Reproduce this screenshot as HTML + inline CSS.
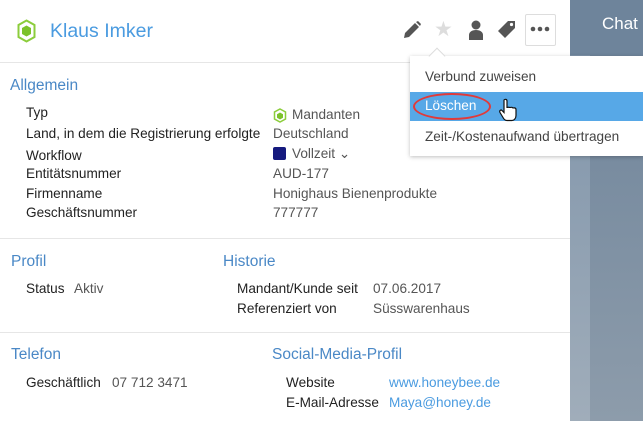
<!DOCTYPE html><html><head><style>
body{margin:0;width:643px;height:421px;overflow:hidden;background:#fff;font-family:"Liberation Sans",sans-serif;position:relative}
.a{position:absolute;white-space:nowrap;line-height:16px}
.l{font-size:13.6px;color:#222}
.v{font-size:13.6px;color:#555}
.h{font-size:15.5px;color:#4a88c6;line-height:18px}
.lk{font-size:13.6px;color:#4a9be0}
.sep{position:absolute;left:0;width:570px;height:1px;background:#e6e6e6}
</style></head><body>
<div style="position:absolute;left:570px;top:0;width:73px;height:421px;background:linear-gradient(#7b91a8,#a0adba)"></div>
<div style="position:absolute;left:590px;top:0;width:53px;height:421px;background:linear-gradient(#6c8299,#8d9cab)"></div>
<div style="position:absolute;left:570px;top:0;width:73px;height:55px;background:#6e849b"></div>
<div class="a" style="left:602px;top:14px;font-size:17px;color:#fff;line-height:20px">Chat</div>

<svg class="a" style="left:17px;top:19px" width="19" height="24" viewBox="0 0 19 24"><polygon points="9.5,1.5 17.5,6 17.5,18 9.5,22.5 1.5,18 1.5,6" fill="none" stroke="#8ccd3c" stroke-width="2"/><polygon points="9.5,6.5 14,9 14,15 9.5,17.5 5,15 5,9" fill="#7cc22a"/></svg>
<div class="a" style="left:50px;top:20px;font-size:19.5px;color:#4a9be0;line-height:22px">Klaus Imker</div>

<svg class="a" style="left:402px;top:20px" width="20" height="20" viewBox="0 0 20 20"><path d="M2 18l1-5L13 3l4 4L7 17z M14 2l2-1 3 3-1 2z" fill="#555"/></svg>
<div class="a" style="left:434px;top:19px;font-size:21px;color:#ddd;line-height:22px">★</div>
<svg class="a" style="left:467px;top:19px" width="18" height="22" viewBox="0 0 18 22"><circle cx="9" cy="6" r="4.5" fill="#555"/><path d="M2 21v-5c0-3 3-5 7-5s7 2 7 5v5z" fill="#555"/></svg>
<svg class="a" style="left:497px;top:19px" width="20" height="22" viewBox="0 0 20 22"><path d="M11 2h7v7L8 19 1 12z" fill="#555"/><circle cx="14.5" cy="5.5" r="1.6" fill="#fff"/></svg>
<div style="position:absolute;left:525px;top:14px;width:29px;height:30px;border:1px solid #ddd;border-radius:2px;background:#fff"></div>
<svg class="a" style="left:530px;top:26px" width="20" height="6" viewBox="0 0 20 6"><circle cx="3" cy="3" r="2.3" fill="#555"/><circle cx="10" cy="3" r="2.3" fill="#555"/><circle cx="17" cy="3" r="2.3" fill="#555"/></svg>

<div class="sep" style="top:62px"></div>

<div style="position:absolute;left:410px;top:56px;width:233px;height:100px;background:#fff;box-shadow:0 1px 4px rgba(0,0,0,.25)"></div>
<div style="position:absolute;left:431px;top:50px;width:11px;height:11px;background:#fff;transform:rotate(45deg);border-left:1px solid #ddd;border-top:1px solid #ddd"></div>
<div style="position:absolute;left:410px;top:92px;width:233px;height:29px;background:#57a8e7"></div>
<div class="a v" style="left:425px;top:69px;color:#444">Verbund zuweisen</div>
<div class="a" style="left:425px;top:98px;font-size:13.6px;color:#fff">Löschen</div>
<div style="position:absolute;left:413px;top:93px;width:74px;height:23px;border:2px solid #e03a3a;border-radius:50%"></div>
<svg class="a" style="left:499px;top:98px" width="18" height="24" viewBox="0 0 18 24"><path d="M5 2c1-1 3-1 3 1v7c0-1 3-1 3 0 0-1 3-1 3 0.5 0-1 3-1 3 1v6c0 3-2 5-4 5H8c-2 0-3-1-4-3l-3-5c-1-2 1-3 2-2l2 2z" fill="#fff" stroke="#111" stroke-width="1.2"/></svg>
<div class="a v" style="left:425px;top:129px;color:#444">Zeit-/Kostenaufwand übertragen</div>

<div class="a h" style="left:10px;top:77px">Allgemein</div>
<div class="a l" style="left:26px;top:105px">Typ</div>
<svg class="a" style="left:273px;top:108px" width="14" height="15" viewBox="0 0 14 15"><polygon points="7,1 12.5,4 12.5,11 7,14 1.5,11 1.5,4" fill="none" stroke="#8ccd3c" stroke-width="1.5"/><polygon points="7,4.5 10,6.2 10,9.8 7,11.5 4,9.8 4,6.2" fill="#7cc22a"/></svg>
<div class="a v" style="left:292px;top:107px">Mandanten</div>
<div class="a l" style="left:26px;top:126px">Land, in dem die Registrierung erfolgte</div>
<div class="a v" style="left:273px;top:126px">Deutschland</div>
<div class="a l" style="left:26px;top:148px">Workflow</div>
<div style="position:absolute;left:273px;top:147px;width:13px;height:13px;background:#151a7e;border-radius:2px"></div>
<div class="a v" style="left:292px;top:146px">Vollzeit ⌄</div>
<div class="a l" style="left:26px;top:166px">Entitätsnummer</div>
<div class="a v" style="left:273px;top:166px">AUD-177</div>
<div class="a l" style="left:26px;top:186px">Firmenname</div>
<div class="a v" style="left:273px;top:186px">Honighaus Bienenprodukte</div>
<div class="a l" style="left:26px;top:205px">Geschäftsnummer</div>
<div class="a v" style="left:273px;top:205px">777777</div>

<div class="sep" style="top:238px"></div>
<div class="a h" style="left:11px;top:253px">Profil</div>
<div class="a h" style="left:223px;top:253px">Historie</div>
<div class="a l" style="left:26px;top:281px">Status</div>
<div class="a v" style="left:74px;top:281px">Aktiv</div>
<div class="a l" style="left:237px;top:281px">Mandant/Kunde seit</div>
<div class="a v" style="left:373px;top:281px">07.06.2017</div>
<div class="a l" style="left:237px;top:301px">Referenziert von</div>
<div class="a v" style="left:373px;top:301px">Süsswarenhaus</div>

<div class="sep" style="top:332px"></div>
<div class="a h" style="left:11px;top:346px">Telefon</div>
<div class="a h" style="left:272px;top:346px">Social-Media-Profil</div>
<div class="a l" style="left:26px;top:375px">Geschäftlich</div>
<div class="a v" style="left:112px;top:375px">07 712 3471</div>
<div class="a l" style="left:286px;top:375px">Website</div>
<div class="a lk" style="left:389px;top:375px">www.honeybee.de</div>
<div class="a l" style="left:286px;top:395px">E-Mail-Adresse</div>
<div class="a lk" style="left:389px;top:395px">Maya@honey.de</div>
</body></html>
